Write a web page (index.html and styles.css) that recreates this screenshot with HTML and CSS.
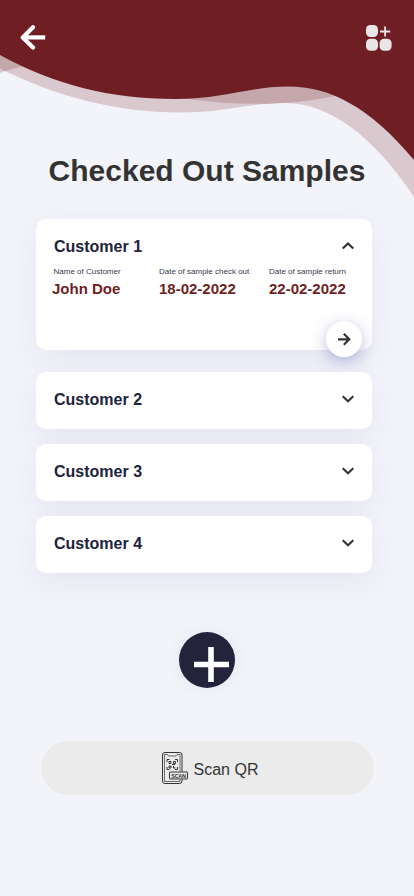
FILE: index.html
```html
<!DOCTYPE html>
<html lang="en">
<head>
<meta charset="utf-8">
<meta name="viewport" content="width=device-width, initial-scale=1">
<title>Checked Out Samples</title>
<link rel="stylesheet" href="styles.css">
</head>
<body>
<main class="screen">
  <svg class="wave" width="414" height="200" viewBox="0 0 414 200" aria-hidden="true">
    <path fill="#d9c9cf" d="M0 0H414V197C374 137 330 103 285 103C250 103 225 112.500 180 112.500C115 112.500 55 96 0 68.500Z"/>
    <path fill="#d9c9cf" d="M0 50H35L24 66Q12 68 0 73Z"/>
    <path fill="#c4a6ab" d="M0 50H35L24 66Q14 68 5 71.300L0 68.500ZM185 85H320L335 96C290 106 235 106 185 98.500Z"/>
    <path fill="#6f1f24" d="M0 0H414V160C370 107 330 86.500 288 86.500C250 86.500 222 99 175 99C110 99 55 85 0 55Z"/>
  </svg>
  <header class="bar">
    <svg width="26" height="26" viewBox="0 0 26 26" fill="none" stroke="#fff" stroke-width="4.200"><path stroke-linecap="round" stroke-linejoin="round" d="M13 2.200 2.800 12.400 13 22.600"/><path d="M4 12.400H25.200"/></svg>
    <svg width="26" height="26" viewBox="0 0 26 26" fill="#e8e6e7"><rect width="12" height="12" rx="4.500"/><rect y="13.800" width="12" height="12" rx="4.500"/><rect x="13.600" y="13.800" width="12" height="12" rx="4.500"/><path d="M14 5.600h4.200v-4.200h1.800v4.200h4.200v1.800h-4.200v4.200h-1.800v-4.200h-4.200z"/></svg>
  </header>
  <h1 class="title">Checked Out Samples</h1>
  <section class="list">
    <article class="card open">
      <div class="head"><h2>Customer 1</h2><svg class="chev" viewBox="0 0 12 8"><path d="M.7 6.500 6 1.500l5.300 5"/></svg></div>
      <dl class="details">
        <div class="name"><dt>Name of Customer</dt><dd>John Doe</dd></div>
        <div class="out"><dt>Date of sample check out</dt><dd>18-02-2022</dd></div>
        <div class="back"><dt>Date of sample return</dt><dd>22-02-2022</dd></div>
      </dl>
      <button class="go" aria-label="Open"><svg width="14" height="14" viewBox="0 0 14 14" fill="none" stroke="#333" stroke-width="2.200"><path d="M1 7.300H12M6.800 1.800 12.300 7.300 6.800 12.800"/></svg></button>
    </article>
    <article class="card"><div class="head"><h2>Customer 2</h2><svg class="chev" viewBox="0 0 12 8"><path d="M.7 1.200l5.300 5 5.300-5"/></svg></div></article>
    <article class="card"><div class="head"><h2>Customer 3</h2><svg class="chev" viewBox="0 0 12 8"><path d="M.7 1.200l5.300 5 5.300-5"/></svg></div></article>
    <article class="card"><div class="head"><h2>Customer 4</h2><svg class="chev" viewBox="0 0 12 8"><path d="M.7 1.200l5.300 5 5.300-5"/></svg></div></article>
  </section>
  <button class="add" aria-label="Add"><svg width="56" height="56" viewBox="0 0 56 56"><path fill="#fff" d="M29.200 15h5.600v14.700H50v5.600H34.800V50h-5.600V35.300H15v-5.600h14.200z"/></svg></button>
  <button class="scan">
    <svg width="26" height="32" viewBox="0 0 26 32" fill="none" stroke="#333">
      <path stroke-width="1" d="M20 19.500V3Q20 .5 17.500 .5H3Q.5 .5 .5 3V29Q.5 31.500 3 31.500H17.500Q20 31.500 20 29V27.500"/>
      <path stroke-width=".7" d="M18 19.500V2.500H15L14 4H6.500L5.500 2.500H2.500V29.500H18V27.500"/>
      <path stroke-width="1" d="M5 10V7.500H7.500M13 7.500h2.500V10M5 15v2.500h2.500M13 17.500h2.500V15M7 9.500h2v2H7zM11.500 9.500h2v2h-2zM7 14h2v2H7zM10 12.500h3M11.500 14v2h2"/>
      <rect x="7.500" y="20" width="18" height="7" rx=".5" fill="#ebebeb" stroke-width="1"/>
      <text class="tag" x="9.300" y="25.500" textLength="14.600" lengthAdjust="spacing">SCAN</text>
    </svg>
    <span>Scan QR</span>
  </button>
</main>
</body>
</html>
```
FILE: styles.css
```css
* { box-sizing: border-box; }
body, h1, h2, dl, dd { margin: 0; }
body {
  background: #f3f4fa;
  color: #333;
  font-family: "Liberation Sans", Arial, sans-serif;
}
button { border: 0; padding: 0; font: inherit; color: inherit; }
svg { display: block; flex: none; }
.screen {
  position: relative;
  width: 414px;
  height: 896px;
  overflow: hidden;
  display: flex;
  flex-direction: column;
}
.wave { position: absolute; top: 0; left: 0; }
.bar {
  position: relative;
  display: flex;
  justify-content: space-between;
  padding: 25px 22px 0 20px;
}
.title {
  position: relative;
  margin-top: 102px;
  text-align: center;
  font-size: 30px;
  line-height: 36px;
}
.list {
  display: flex;
  flex-direction: column;
  gap: 15px;
  margin: 30px 42px 0 36px;
}
.card {
  position: relative;
  height: 57px;
  padding: 18px 18px 0;
  border-radius: 10px;
  background: #fff;
  box-shadow: 0 10px 30px rgba(70, 54, 125, .075);
}
.open { height: 131px; margin-bottom: 7px; }
.head { display: flex; justify-content: space-between; }
h2 { color: #23233c; font-size: 16px; line-height: 19px; }
.chev {
  width: 12px;
  height: 8px;
  margin-top: 5px;
  fill: none;
  stroke: #333;
  stroke-width: 2.1;
  overflow: visible;
}
.details { display: flex; margin-top: 11px; }
.name { width: 105px; }
.out { width: 110px; }
dt { color: #393950; font-size: 8px; line-height: 9px; white-space: nowrap; }
dd { margin-top: 4px; color: #701f24; font-size: 15px; font-weight: 700; line-height: 17px; }
.name dt { margin-left: -.5px; }
.name dd { margin-left: -2px; }
.go {
  position: absolute;
  right: 10px;
  bottom: -7px;
  display: grid;
  place-items: center;
  width: 36px;
  height: 36px;
  border-radius: 50%;
  background: #fff;
  box-shadow: 0 4px 16px rgba(60, 65, 165, .34);
}
.add {
  align-self: center;
  width: 56px;
  height: 56px;
  margin-top: 59px;
  border-radius: 50%;
  background: #23233c;
  box-shadow: 0 0 20px rgba(35, 35, 60, .06);
}
.scan {
  display: flex;
  align-items: center;
  justify-content: center;
  gap: 6px;
  width: 333px;
  height: 54px;
  margin: 53px 0 0 41px;
  padding-left: 5px;
  border-radius: 27px;
  background: #ebebeb;
  font-size: 16px;
}
.scan span { padding-top: 3px; }
.tag { fill: #333; stroke: none; font-size: 5.5px; font-weight: 700; }
```
